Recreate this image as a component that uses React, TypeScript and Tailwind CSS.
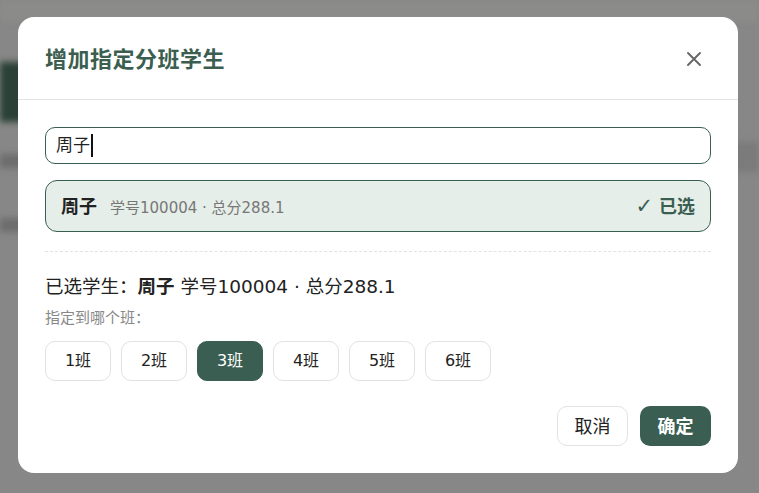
import React from "react";

const font = { fontFamily: '"DejaVu Sans", "Noto Sans CJK SC", sans-serif' };

export default function App() {
  const classes = ["1班", "2班", "3班", "4班", "5班", "6班"];
  return (
    <div className="relative w-full h-[493px] overflow-hidden bg-[#868786]" style={font}>
      {/* blurred page behind the overlay */}
      <div className="absolute inset-0 flex flex-col blur-[3px]">
        <div className="h-[22px] bg-[#8b8c8a]" />
        <div className="flex flex-1">
          <div className="w-[40px] flex flex-col pt-[40px]">
            <div className="h-[60px] bg-[#2b4137]" />
            <div className="h-[32px]" />
            <div className="h-[14px] bg-[#6c6d6c]" />
            <div className="h-[50px]" />
            <div className="h-[14px] bg-[#6c6d6c]" />
          </div>
          <div className="flex-1" />
          <div className="w-[40px] flex flex-col pt-[120px]">
            <div className="h-[30px] bg-[#7a7b7a]" />
          </div>
        </div>
      </div>
      <div className="absolute inset-0 flex items-start justify-start pt-[17px] pl-[18px]">
        <div className="w-[720px] h-[456px] bg-white rounded-[16px] flex flex-col">
          <div className="h-[83px] flex items-center justify-between pl-[27px] pr-[36px] pt-[2px] border-b border-[#e3e3e3]">
            <div className="text-[22px] font-bold text-[#3b5e50] tracking-[0.5px]">增加指定分班学生</div>
            <svg width="16" height="16" viewBox="0 0 16 16" className="text-[#666]">
              <path d="M2 2 L14 14 M14 2 L2 14" stroke="currentColor" strokeWidth="1.9" strokeLinecap="round" />
            </svg>
          </div>
          <div className="flex flex-col px-[27px] pt-[27px] pb-[27px] flex-1">
            <div className="h-[37px] rounded-[10px] border border-[#3a5f52] flex items-center px-[10px] text-[17px] text-[#222]">
              <span>周子</span>
              <span className="w-[1.5px] h-[23px] bg-[#111] ml-[1px]" />
            </div>
            <div className="mt-[16px] h-[52px] rounded-[12px] border border-[#3a5f52] bg-[#e6eee9] flex items-center justify-between px-[15px]">
              <div className="flex items-baseline gap-[13px]">
                <span className="text-[18px] font-bold text-[#222]">周子</span>
                <span className="text-[15px] text-[#777]">学号100004 · 总分288.1</span>
              </div>
              <span className="flex items-center gap-[6px] text-[18px] font-bold text-[#3a5f52]">
                <span className="text-[21px] font-normal leading-none">✓</span>
                <span>已选</span>
              </span>
            </div>
            <div className="mt-[19px] border-t border-dashed border-[#e2e2e2]" />
            <div className="mt-[22px] text-[18.5px] text-[#222] leading-[26px]">
              已选学生：<span className="font-bold">周子</span> 学号100004 · 总分288.1
            </div>
            <div className="mt-[8px] text-[15px] text-[#888] leading-[20px]">指定到哪个班：</div>
            <div className="mt-[13px] flex gap-[10px]">
              {classes.map((c) => (
                <div
                  key={c}
                  className={
                    c === "3班"
                      ? "w-[66px] h-[40px] rounded-[10px] border border-[#3a5f52] bg-[#3a5f52] text-white flex items-center justify-center text-[16px]"
                      : "w-[66px] h-[40px] rounded-[10px] border border-[#e2e2e2] bg-white text-[#222] flex items-center justify-center text-[16px]"
                  }
                >
                  {c}
                </div>
              ))}
            </div>
            <div className="mt-auto flex justify-end gap-[12px]">
              <div className="w-[71px] h-[40px] rounded-[10px] border border-[#e2e2e2] flex items-center justify-center text-[18px] text-[#222]">取消</div>
              <div className="w-[71px] h-[40px] rounded-[10px] bg-[#3a5f52] flex items-center justify-center text-[18px] font-bold text-white">确定</div>
            </div>
          </div>
        </div>
      </div>
    </div>
  );
}
